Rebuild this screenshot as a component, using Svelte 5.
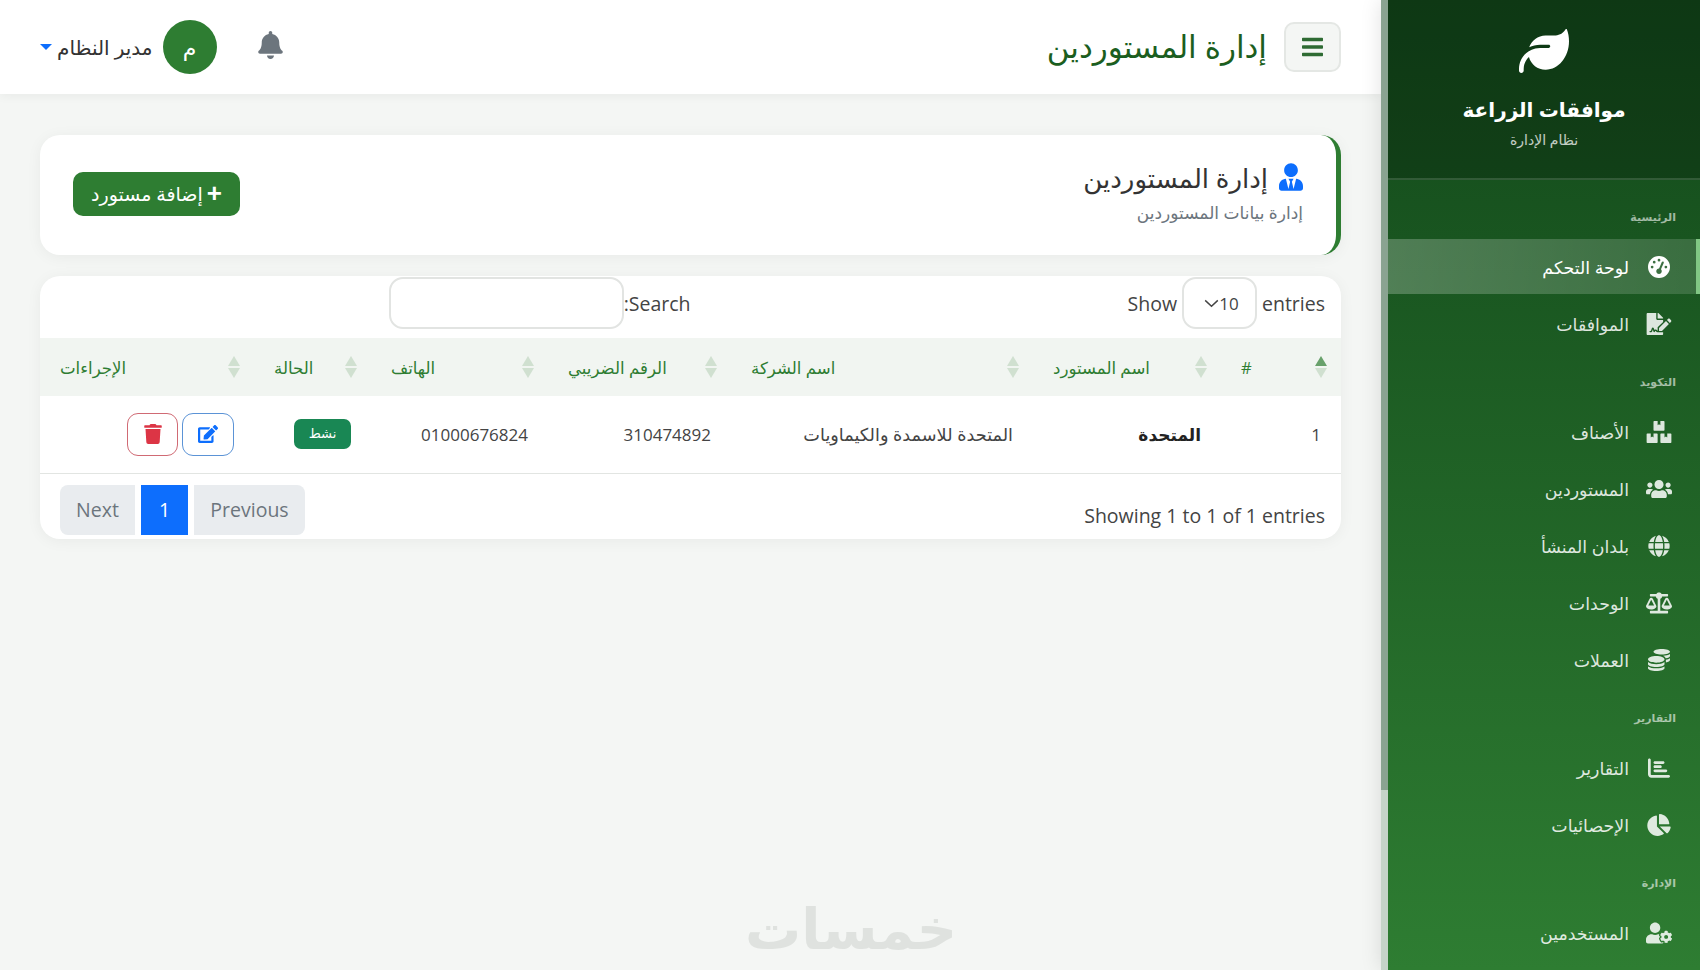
<script>
const icons = {
	gauge: ["0 0 512 512", "M0 256a256 256 0 1 1 512 0A256 256 0 1 1 0 256zM288 96a32 32 0 1 0 -64 0 32 32 0 1 0 64 0zM256 416c35.3 0 64-28.7 64-64c0-17.4-6.9-33.1-18.1-44.6L366 161.7c5.3-12.1-.2-26.3-12.3-31.6s-26.3 .2-31.6 12.3L257.9 288c-.6 0-1.3 0-1.9 0c-35.3 0-64 28.7-64 64s28.7 64 64 64zM176 144a32 32 0 1 0 -64 0 32 32 0 1 0 64 0zM96 288a32 32 0 1 0 0-64 32 32 0 1 0 0 64zm352-32a32 32 0 1 0 -64 0 32 32 0 1 0 64 0z"],
	file: ["0 0 576 512", "M218.17 424.14c-2.95-5.92-8.09-6.52-10.17-6.52s-7.22.59-10.02 6.19l-7.67 15.34c-6.37 12.78-25.03 11.37-29.48-2.09L144 386.59l-10.61 31.88c-5.89 17.66-22.38 29.53-41 29.53H80c-8.84 0-16-7.16-16-16s7.16-16 16-16h12.39c4.83 0 9.11-3.08 10.64-7.66l18.19-54.64c3.3-9.81 12.44-16.41 22.78-16.41s19.48 6.59 22.77 16.41l13.88 41.64c19.75-16.19 54.06-9.7 66 14.16 1.89 3.78 5.49 5.95 9.36 6.26v-82.12l128-127.09V160H248c-13.2 0-24-10.8-24-24V0H24C10.7 0 0 10.7 0 24v464c0 13.3 10.7 24 24 24h336c13.3 0 24-10.7 24-24v-40l-128-.11c-16.12-.31-30.58-9.28-37.83-23.75zM384 121.9c0-6.3-2.5-12.4-7-16.9L279.1 7c-4.5-4.5-10.6-7-17-7H256v128h128v-6.1zm-96 225.06V416h68.99l161.68-162.78-67.88-67.88L288 346.96zm280.54-179.63l-31.87-31.87c-9.94-9.94-26.07-9.94-36.01 0l-27.25 27.25 67.88 67.88 27.25-27.25c9.95-9.94 9.95-26.07 0-36.01z"],
	boxes: ["0 0 576 512", "M560 288h-80v96l-32-21.3-32 21.3v-96h-80c-8.8 0-16 7.2-16 16v192c0 8.8 7.2 16 16 16h224c8.8 0 16-7.2 16-16V304c0-8.8-7.2-16-16-16zm-384-64h224c8.8 0 16-7.2 16-16V16c0-8.8-7.2-16-16-16h-80v96l-32-21.3L256 96V0h-80c-8.8 0-16 7.2-16 16v192c0 8.8 7.2 16 16 16zm64 64h-80v96l-32-21.3L96 384v-96H16c-8.8 0-16 7.2-16 16v192c0 8.8 7.2 16 16 16h224c8.8 0 16-7.2 16-16V304c0-8.8-7.2-16-16-16z"],
	users: ["0 0 640 512", "M96 224c35.3 0 64-28.7 64-64s-28.7-64-64-64-64 28.7-64 64 28.7 64 64 64zm448 0c35.3 0 64-28.7 64-64s-28.7-64-64-64-64 28.7-64 64 28.7 64 64 64zm32 32h-64c-17.6 0-33.5 7.1-45.1 18.6 40.3 22.1 68.9 62 75.1 109.4h66c17.7 0 32-14.3 32-32v-32c0-35.3-28.7-64-64-64zm-256 0c61.9 0 112-50.1 112-112S381.9 32 320 32 208 82.1 208 144s50.1 112 112 112zm76.8 32h-8.3c-20.8 10-43.9 16-68.5 16s-47.6-6-68.5-16h-8.3C179.6 288 128 339.6 128 403.2V432c0 26.5 21.5 48 48 48h288c26.5 0 48-21.5 48-48v-28.8c0-63.6-51.6-115.2-115.2-115.2zm-223.7-13.4C161.5 263.1 145.6 256 128 256H64c-35.3 0-64 28.7-64 64v32c0 17.7 14.3 32 32 32h65.9c6.3-47.4 34.9-87.3 75.2-109.4z"],
	globe: ["0 0 496 512", "M336.5 160C322 70.7 287.8 8 248 8s-74 62.7-88.5 152h177zM152 256c0 22.2 1.2 43.5 3.3 64h185.3c2.1-20.5 3.3-41.8 3.3-64s-1.2-43.5-3.3-64H155.3c-2.1 20.5-3.3 41.8-3.3 64zm324.7-96c-28.6-67.9-86.5-120.4-158-141.6 24.4 33.8 41.2 84.7 50 141.6h108zM177.2 18.4C105.8 39.6 47.8 92.1 19.3 160h108c8.7-56.9 25.5-107.8 49.9-141.6zM487.4 192H372.7c2.1 21 3.3 42.5 3.3 64s-1.2 43-3.3 64h114.6c5.5-20.5 8.6-41.8 8.6-64s-3.1-43.5-8.5-64zM120 256c0-21.5 1.2-43 3.3-64H8.6C3.2 212.5 0 233.8 0 256s3.2 43.5 8.6 64h114.6c-2-21-3.2-42.5-3.2-64zm39.5 96c14.5 89.3 48.7 152 88.5 152s74-62.7 88.5-152h-177zm159.3 141.6c71.4-21.2 129.4-73.7 158-141.6h-108c-8.8 56.9-25.6 107.8-50 141.6zM19.3 352c28.6 67.9 86.5 120.4 158 141.6-24.4-33.8-41.2-84.7-50-141.6h-108z"],
	scale: ["0 0 640 512", "M256 336h-.02c0-16.18 1.34-8.73-85.05-181.51-17.65-35.29-68.19-35.36-85.87 0C-2.06 328.75.02 320.33.02 336H0c0 44.18 57.31 80 128 80s128-35.82 128-80zM128 176l72 144H56l72-144zm511.98 160c0-16.18 1.34-8.73-85.05-181.51-17.65-35.29-68.19-35.36-85.87 0-87.12 174.26-85.04 165.84-85.04 181.51H384c0 44.18 57.31 80 128 80s128-35.82 128-80h-.02zM440 320l72-144 72 144H440zm88 128H352V153.25c23.51-10.29 41.16-31.48 46.39-57.25H528c8.84 0 16-7.16 16-16V48c0-8.84-7.16-16-16-16H383.64C369.04 12.68 346.09 0 320 0s-49.04 12.68-63.64 32H112c-8.84 0-16 7.16-16 16v32c0 8.84 7.16 16 16 16h129.61c5.23 25.76 22.87 46.96 46.39 57.25V448H112c-8.84 0-16 7.16-16 16v32c0 8.84 7.16 16 16 16h416c8.84 0 16-7.16 16-16v-32c0-8.84-7.16-16-16-16z"],
	coins: ["0 0 512 512", "M0 405.3V448c0 35.3 86 64 192 64s192-28.7 192-64v-42.7C342.7 434.4 267.2 448 192 448S41.3 434.4 0 405.3zM320 128c106 0 192-28.7 192-64S426 0 320 0 128 28.7 128 64s86 64 192 64zM0 300.4V352c0 35.3 86 64 192 64s192-28.7 192-64v-51.6c-41.3 34-116.9 51.6-192 51.6S41.3 334.4 0 300.4zm416 11c57.3-11.1 96-31.7 96-55.4v-42.7c-23.2 16.4-57.3 27.6-96 34.5v63.6zM192 160C86 160 0 195.8 0 240s86 80 192 80 192-35.8 192-80-86-80-192-80zm219.3 56.3c60-10.8 100.7-32 100.7-56.3v-42.7c-35.5 25.1-96.5 38.6-160.7 41.8 29.5 14.3 51.2 33.5 60 57.2z"],
	bars: ["0 0 512 512", "M32 32c17.7 0 32 14.3 32 32V400c0 8.8 7.2 16 16 16H480c17.7 0 32 14.3 32 32s-14.3 32-32 32H80c-44.2 0-80-35.8-80-80V64C0 46.3 14.3 32 32 32zm96 96c0-17.7 14.3-32 32-32l192 0c17.7 0 32 14.3 32 32s-14.3 32-32 32l-192 0c-17.7 0-32-14.3-32-32zm32 64l128 0c17.7 0 32 14.3 32 32s-14.3 32-32 32l-128 0c-17.7 0-32-14.3-32-32s14.3-32 32-32zm0 96H416c17.7 0 32 14.3 32 32s-14.3 32-32 32H160c-17.7 0-32-14.3-32-32s14.3-32 32-32z"],
	pie: ["0 0 544 512", "M527.79 288H290.5l158.03 158.03c6.04 6.04 15.98 6.5 22.19.65 38.7-36.46 65.32-85.61 73.13-140.86 1.34-9.46-6.51-17.82-16.06-17.82zm-15.83-64.8C503.72 103.74 408.26 8.28 288.8.04 279.68-.59 272 7.1 272 16.24V240h223.77c9.14 0 16.82-7.68 16.19-16.8zM224 288V50.71c0-9.55-8.36-17.4-17.82-16.06C86.99 51.49-4.1 155.6.14 280.37 4.5 408.51 114.83 513.59 243.03 511.98c50.4-.63 96.97-16.87 135.26-44.03 7.9-5.6 8.42-17.23 1.57-24.08L224 288z"],
	usercog: ["0 0 640 512", "M610.5 373.3c2.6-14.1 2.6-28.5 0-42.6l25.8-14.9c3-1.7 4.3-5.2 3.3-8.5-6.7-21.5-18.2-41-33.2-57.1-2.3-2.5-6-3.1-9-1.4l-25.8 14.9c-10.9-9.3-23.4-16.5-36.9-21.3v-29.8c0-3.4-2.4-6.4-5.7-7.1-22.3-5-45-4.8-66.2 0-3.3.7-5.7 3.7-5.7 7.1v29.8c-13.5 4.8-26 12-36.9 21.3l-25.8-14.9c-2.9-1.7-6.7-1.1-9 1.4-15 16.1-26.5 35.6-33.2 57.1-1 3.3.4 6.8 3.3 8.5l25.8 14.9c-2.6 14.1-2.6 28.5 0 42.6l-25.8 14.9c-3 1.7-4.3 5.2-3.3 8.5 6.7 21.5 18.2 41 33.2 57.1 2.3 2.5 6 3.1 9 1.4l25.8-14.9c10.9 9.3 23.4 16.5 36.9 21.3v29.8c0 3.4 2.4 6.4 5.7 7.1 22.3 5 45 4.8 66.2 0 3.3-.7 5.7-3.7 5.7-7.1v-29.8c13.5-4.8 26-12 36.9-21.3l25.8 14.9c2.9 1.7 6.7 1.1 9-1.4 15-16.1 26.5-35.6 33.2-57.1 1-3.3-.4-6.8-3.3-8.5l-25.8-14.9zM496 400.5c-26.8 0-48.5-21.8-48.5-48.5s21.8-48.5 48.5-48.5 48.5 21.8 48.5 48.5-21.7 48.5-48.5 48.5zM224 256c70.7 0 128-57.3 128-128S294.7 0 224 0 96 57.3 96 128s57.3 128 128 128zm201.2 226.5c-2.3-1.2-4.6-2.6-6.8-3.9l-7.9 4.6c-6 3.4-12.8 5.3-19.6 5.3-10.9 0-21.4-4.6-28.9-12.6-18.3-19.8-32.3-43.9-40.2-69.6-5.5-17.7 1.9-36.4 17.9-45.7l7.9-4.6c-.1-2.6-.1-5.2 0-7.8l-7.9-4.6c-16-9.2-23.4-28-17.9-45.7.9-2.9 2.2-5.8 3.2-8.7-3.8-.3-7.5-1.2-11.4-1.2h-16.7c-22.2 10.2-46.9 16-72.9 16s-50.6-5.8-72.9-16h-16.7C60.2 288 0 348.2 0 422.4V464c0 26.5 21.5 48 48 48h352c10.1 0 19.5-3.2 27.2-8.5-1.2-3.8-2-7.7-2-11.8v-9.2z"],
	leaf: ["0 0 512 512", "M272 96c-78.6 0-145.1 51.5-167.7 122.5c33.6-17 71.5-26.5 111.7-26.5h88c8.8 0 16 7.2 16 16s-7.2 16-16 16H288 216s0 0 0 0c-16.6 0-32.7 1.9-48.3 5.4c-25.9 5.9-49.9 16.4-71.4 30.7c0 0 0 0 0 0C38.3 298.8 0 364.9 0 440v16c0 13.3 10.7 24 24 24s24-10.7 24-24V440c0-48.7 20.7-92.5 53.8-123.2C121.6 392.3 190.3 448 272 448l1 0c132.1-.7 239-130.9 239-291.4c0-42.6-7.5-83.1-21.1-119.6c-2.6-6.9-12.7-6.6-16.2 0C455.9 72.1 418.7 96 376 96L272 96z"],
	menu: ["0 0 448 512", "M16 132h416c8.837 0 16-7.163 16-16V76c0-8.837-7.163-16-16-16H16C7.163 60 0 67.163 0 76v40c0 8.837 7.163 16 16 16zm0 160h416c8.837 0 16-7.163 16-16v-40c0-8.837-7.163-16-16-16H16c-8.837 0-16 7.163-16 16v40c0 8.837 7.163 16 16 16zm0 160h416c8.837 0 16-7.163 16-16v-40c0-8.837-7.163-16-16-16H16c-8.837 0-16 7.163-16 16v40c0 8.837 7.163 16 16 16z"],
	bell: ["0 0 448 512", "M224 512c35.32 0 63.97-28.65 63.97-64H160.03c0 35.35 28.65 64 63.97 64zm215.39-149.71c-19.32-20.76-55.47-51.99-55.47-154.29 0-77.7-54.48-139.9-127.94-155.16V32c0-17.67-14.32-32-31.98-32s-31.98 14.33-31.98 32v20.84C118.56 68.1 64.08 130.3 64.08 208c0 102.3-36.15 133.53-55.47 154.29-6 6.45-8.66 14.16-8.61 21.71.11 16.4 12.98 32 32.1 32h383.8c19.12 0 32-15.6 32.1-32 .05-7.55-2.61-15.27-8.61-21.71z"],
	usertie: ["0 0 448 512", "M224 256c70.7 0 128-57.3 128-128S294.7 0 224 0 96 57.3 96 128s57.3 128 128 128zm95.8 32.6L272 480l-32-136 32-56h-96l32 56-32 136-47.8-191.4C56.9 292 0 350.3 0 422.4V464c0 26.5 21.5 48 48 48h352c26.5 0 48-21.5 48-48v-41.6c0-72.1-56.9-130.4-128.2-133.8z"],
	edit: ["0 0 576 512", "M402.6 83.2l90.2 90.2c3.8 3.8 3.8 10 0 13.8L274.4 405.6l-92.8 10.3c-12.4 1.4-22.9-9.1-21.5-21.5l10.3-92.8L388.8 83.2c3.8-3.8 10-3.8 13.8 0zm162-22.9l-48.8-48.8c-15.2-15.2-39.9-15.2-55.2 0l-35.4 35.4c-3.8 3.8-3.8 10 0 13.8l90.2 90.2c3.8 3.8 10 3.8 13.8 0l35.4-35.4c15.2-15.3 15.2-40 0-55.2zM384 346.2V448H64V128h231.8c3.2 0 6.2-1.3 8.5-3.5l40-40c7.6-7.6 2.2-20.5-8.5-20.5H48C21.5 64 0 85.5 0 112v352c0 26.5 21.5 48 48 48h352c26.5 0 48-21.5 48-48V306.2c0-10.7-12.9-16-20.5-8.5l-40 40c-2.2 2.3-3.5 5.3-3.5 8.5z"],
	trash: ["0 0 448 512", "M432 32H312l-9.4-18.7A24 24 0 0 0 281.1 0H166.8a23.72 23.72 0 0 0-21.4 13.3L136 32H16A16 16 0 0 0 0 48v32a16 16 0 0 0 16 16h416a16 16 0 0 0 16-16V48a16 16 0 0 0-16-16zM53.2 467a48 48 0 0 0 47.9 45h245.8a48 48 0 0 0 47.9-45L416 128H32z"],
};

const groups = [
	{ label: "الرئيسية", items: [
		{ text: "لوحة التحكم", icon: "gauge", active: true },
		{ text: "الموافقات", icon: "file" },
	] },
	{ label: "التكويد", items: [
		{ text: "الأصناف", icon: "boxes" },
		{ text: "المستوردين", icon: "users" },
		{ text: "بلدان المنشأ", icon: "globe" },
		{ text: "الوحدات", icon: "scale" },
		{ text: "العملات", icon: "coins" },
	] },
	{ label: "التقارير", items: [
		{ text: "التقارير", icon: "bars" },
		{ text: "الإحصائيات", icon: "pie" },
	] },
	{ label: "الإدارة", items: [
		{ text: "المستخدمين", icon: "usercog" },
	] },
];

const columns = ["#", "اسم المستورد", "اسم الشركة", "الرقم الضريبي", "الهاتف", "الحالة", "الإجراءات"];
const widths = [120, 188, 302, 183, 177, 117, 214];
</script>

{#snippet icon(name, cls)}
	<svg class={cls} viewBox={icons[name][0]} aria-hidden="true"><path d={icons[name][1]} /></svg>
{/snippet}

<div class="app">
	<aside class="sidebar">
		<div class="sb-track"><div class="sb-thumb"></div></div>
		<div class="sb-body">
			<div class="brand">
				{@render icon("leaf", "brand-leaf")}
				<div class="brand-name">موافقات الزراعة</div>
				<div class="brand-sub">نظام الإدارة</div>
			</div>
			<nav class="nav">
				{#each groups as g}
					<div class="group">
						<div class="group-label">{g.label}</div>
						{#each g.items as it}
							<div class="nav-item" class:active={it.active}>
								<span class="nav-icon">{@render icon(it.icon, "nav-svg")}</span>
								<span>{it.text}</span>
							</div>
						{/each}
					</div>
				{/each}
			</nav>
		</div>
	</aside>

	<main class="main">
		<header class="topbar">
			<div class="top-start">
				<button class="menu-btn">{@render icon("menu", "menu-svg")}</button>
				<h1 class="top-title">إدارة المستوردين</h1>
			</div>
			<div class="top-end">
				{@render icon("bell", "bell-svg")}
				<div class="user">
					<div class="avatar">م</div>
					<span class="user-name">مدير النظام</span>
					<span class="caret"></span>
				</div>
			</div>
		</header>

		<section class="content">
			<div class="page-head">
				<div class="head-text">
					<h2 class="page-title">{@render icon("usertie", "title-svg")}<span>إدارة المستوردين</span></h2>
					<p class="page-sub">إدارة بيانات المستوردين</p>
				</div>
				<button class="add-btn"><span class="plus">+</span>إضافة مستورد</button>
			</div>

			<div class="table-card">
				<div class="dt-top">
					<div class="dt-length">
						<span>entries</span>
						<div class="select"><span>10</span><svg class="chev" viewBox="0 0 16 10"><path d="M1 1.5l7 6.5 7-6.5" /></svg></div>
						<span>Show</span>
					</div>
					<label class="dt-filter">Search:<input class="search" type="text" /></label>
				</div>

				<table>
					<colgroup>
						{#each widths as w}<col style="width: {w}px" />{/each}
					</colgroup>
					<thead>
						<tr>
							{#each columns as c, i}
								<th>
									{c}
									<span class="sort" class:asc={i === 0}><i class="up"></i><i class="down"></i></span>
								</th>
							{/each}
						</tr>
					</thead>
					<tbody>
						<tr>
							<td>1</td>
							<td class="bold">المتحدة</td>
							<td class="company">المتحدة للاسمدة والكيماويات</td>
							<td>310474892</td>
							<td>01000676824</td>
							<td><span class="badge">نشط</span></td>
							<td>
								<div class="actions">
									<button class="act edit">{@render icon("edit", "act-svg")}</button>
									<button class="act del">{@render icon("trash", "act-svg")}</button>
								</div>
							</td>
						</tr>
					</tbody>
				</table>

				<div class="dt-bottom">
					<div class="dt-info">Showing 1 to 1 of 1 entries</div>
					<div class="pager">
						<span class="pg first">Previous</span>
						<span class="pg current">1</span>
						<span class="pg last">Next</span>
					</div>
				</div>
			</div>
		</section>

		<div class="watermark">خمسات</div>
	</main>
</div>

<style>
	:global(body) {
		margin: 0;
		background: #f4f6f4;
		font-family: "Open Sans", "DejaVu Sans", sans-serif;
	}
	.app {
		display: flex;
		direction: rtl;
		height: 970px;
		overflow: hidden;
		color: #333;
	}
	svg { fill: currentColor; display: block; flex: none; }
	button { font-family: inherit; cursor: pointer; }
	h1, h2, p { margin: 0; font-weight: 400; }

	/* sidebar */
	.sidebar {
		flex: none;
		width: 319px;
		display: flex;
		flex-direction: row;
		position: relative;
		z-index: 2;
		background: linear-gradient(180deg, #12481a 0%, #2e7d32 100%);
		box-shadow: 0 0 20px rgba(0, 0, 0, 0.12);
		color: #fff;
	}
	.sb-body { flex: 1; min-width: 0; order: 0; }
	.sb-track { order: 1; width: 7px; background: #c5d3c8; }
	.sb-thumb { height: 790px; background: #8aa391; }
	.brand {
		height: 180px;
		box-sizing: border-box;
		padding-top: 29px;
		display: flex;
		flex-direction: column;
		align-items: center;
		background: rgba(0, 0, 0, 0.22);
		border-bottom: 2px solid rgba(255, 255, 255, 0.14);
	}
	.brand-leaf { width: 50px; height: 50px; margin-top: -3px; }
	.brand-name { font-size: 20px; font-weight: 700; margin-top: 19px; line-height: 30px; }
	.brand-sub { font-size: 14px; opacity: 0.75; line-height: 20px; margin-top: 5px; }
	.nav { padding-top: 27px; }
	.group { margin-bottom: 21px; }
	.group-label {
		font-size: 11px;
		font-weight: 700;
		line-height: 20px;
		padding-right: 24px;
		margin-bottom: 12px;
		color: rgba(255, 255, 255, 0.6);
	}
	.nav-item {
		display: flex;
		align-items: center;
		gap: 16px;
		height: 55px;
		margin-bottom: 2px;
		padding-right: 27px;
		font-size: 17.4px;
		color: rgba(255, 255, 255, 0.85);
		box-sizing: border-box;
	}
	.nav-item.active {
		color: #fff;
		background: linear-gradient(90deg, rgba(255, 255, 255, 0.24), rgba(255, 255, 255, 0.14));
		border-right: 4px solid #81c784;
		padding-right: 23px;
	}
	.nav-icon { width: 28px; display: flex; justify-content: center; }
	.nav-svg { width: 26px; height: 22px; }

	/* top bar */
	.main { flex: 1; min-width: 0; position: relative; }
	.topbar {
		height: 94px;
		box-sizing: border-box;
		background: #fff;
		box-shadow: 0 2px 10px rgba(0, 0, 0, 0.05);
		display: flex;
		align-items: center;
		justify-content: space-between;
		padding: 0 40px;
	}
	.top-start { display: flex; align-items: center; gap: 17px; }
	.menu-btn {
		width: 57px;
		height: 50px;
		background: #f4f6f4;
		border: 2px solid #e4e7e4;
		border-radius: 10px;
		color: #2e6b33;
		display: flex;
		align-items: center;
		justify-content: center;
		padding: 0;
	}
	.menu-svg { width: 21px; height: 24px; }
	.top-title { font-size: 31px; color: #1b5e20; margin-top: -2px; }
	.top-end { display: flex; align-items: center; gap: 41px; }
	.bell-svg { width: 25px; height: 28px; color: #6c757d; margin-top: -5px; }
	.user { display: flex; align-items: center; gap: 10px; }
	.avatar {
		width: 54px;
		height: 54px;
		border-radius: 50%;
		background: #2e7d32;
		color: #fff;
		font-size: 22px;
		display: flex;
		align-items: center;
		justify-content: center;
	}
	.user-name { font-size: 20px; color: #333; }
	.caret {
		width: 0;
		height: 0;
		border-left: 6px solid transparent;
		border-right: 6px solid transparent;
		border-top: 6px solid #0d6efd;
		margin-right: -5px;
	}

	/* content */
	.content { padding: 41px 40px 0; }
	.page-head {
		height: 120px;
		box-sizing: border-box;
		background: #fff;
		border-radius: 20px;
		border-right: 5px solid #2e7d32;
		box-shadow: 0 2px 15px rgba(0, 0, 0, 0.05);
		padding: 0 33px 0 33px;
		display: flex;
		align-items: center;
		justify-content: space-between;
		margin-bottom: 21px;
	}
	.head-text { margin-top: -8px; }
	.page-title {
		display: flex;
		align-items: center;
		gap: 11px;
		font-size: 26px;
		line-height: 38px;
		color: #333;
	}
	.title-svg { width: 24px; height: 28px; color: #0d6efd; margin-top: -1px; }
	.page-sub { font-size: 17px; color: #6c757d; margin-top: 4px; }
	.add-btn {
		width: 167px;
		height: 44px;
		margin-top: -2px;
		background: #2e7d32;
		border: 0;
		border-radius: 10px;
		color: #fff;
		font-size: 19px;
		display: flex;
		align-items: center;
		justify-content: center;
		gap: 4px;
	}
	.plus { font-size: 26px; line-height: 1; font-family: "Liberation Sans", sans-serif; font-weight: 700; margin-top: -3px; }

	.table-card {
		background: #fff;
		border-radius: 20px;
		box-shadow: 0 2px 15px rgba(0, 0, 0, 0.05);
		overflow: hidden;
	}
	.dt-top {
		display: grid;
		grid-template-columns: 1fr 1fr;
		height: 62px;
		box-sizing: border-box;
		padding-top: 1px;
		font-size: 19.5px;
		color: #444;
	}
	.dt-length {
		display: flex;
		justify-content: flex-start;
		gap: 5px;
		padding-right: 16px;
		align-items: center;
		height: 52px;
	}
	.select {
		width: 75px;
		height: 52px;
		box-sizing: border-box;
		border: 2px solid #e2e4e2;
		border-radius: 14px;
		display: flex;
		align-items: center;
		justify-content: center;
		font-size: 17px;
		padding-left: 4px;
	}
	.chev { width: 15px; height: 9px; fill: none; stroke: #444; stroke-width: 1.6; }
	.dt-filter { display: flex; align-items: center; height: 52px; }
	.search {
		width: 235px;
		height: 52px;
		box-sizing: border-box;
		border: 2px solid #e2e4e2;
		border-radius: 14px;
		background: #fff;
		outline: none;
	}
	table { width: 100%; border-collapse: collapse; table-layout: fixed; }
	th {
		position: relative;
		height: 58px;
		padding: 0 20px;
		text-align: left;
		font-size: 16.6px;
		font-weight: 400;
		color: #2e7d32;
		background: #f1f5f1;
	}
	.sort {
		position: absolute;
		right: 14px;
		top: 18px;
		display: flex;
		flex-direction: column;
		gap: 2px;
	}
	.sort i {
		display: block;
		width: 0;
		height: 0;
		border-left: 6px solid transparent;
		border-right: 6px solid transparent;
	}
	.sort .up { border-bottom: 10px solid rgba(46, 125, 50, 0.17); }
	.sort .down { border-top: 10px solid rgba(46, 125, 50, 0.17); }
	.sort.asc .up { border-bottom-color: rgba(46, 125, 50, 0.7); }
	td {
		height: 77px;
		box-sizing: border-box;
		padding: 0 20px;
		font-size: 17px;
		text-align: right;
		color: #444;
		border-bottom: 1px solid #e2e5e2;
	}
	td.bold { font-weight: 700; color: #222; }
	td.company { font-size: 17.7px; }
	.badge {
		display: inline-block;
		width: 57px;
		height: 30px;
		line-height: 28px;
		text-align: center;
		background: #198754;
		color: #fff;
		border-radius: 7px;
		font-size: 13px;
		vertical-align: middle;
	}
	.actions { display: flex; gap: 4px; }
	.act {
		width: 51px;
		height: 43px;
		box-sizing: border-box;
		background: #fff;
		border-radius: 11px;
		display: flex;
		align-items: center;
		justify-content: center;
		padding: 0;
	}
	.act.edit { width: 52px; border: 1px solid #5b93d6; color: #0d6efd; }
	.act.del { border: 1px solid #d06a74; color: #dc3545; }
	.act-svg { width: 20px; height: 20px; }
	.dt-bottom {
		display: grid;
		grid-template-columns: 1fr 1fr;
		height: 65px;
		box-sizing: border-box;
		padding: 11px 16px 3px 20px;
	}
	.dt-info { font-size: 19.5px; color: #444; align-self: end; padding-bottom: 7px; direction: ltr; text-align: right; }
	.pager { display: flex; gap: 6px; justify-content: flex-end; }
	.pg {
		height: 50px;
		box-sizing: border-box;
		padding: 0 17px;
		display: flex;
		align-items: center;
		background: #e9ecef;
		color: #6c757d;
		font-size: 19.5px;
	}
	.pg.first { border-radius: 0 8px 8px 0; padding: 0 16px; width: 111px; justify-content: center; }
	.pg.last { border-radius: 8px 0 0 8px; width: 75px; justify-content: center; }
	.pg.current { background: #0d6efd; color: #fff; width: 47px; justify-content: center; padding: 0; }

	.watermark {
		position: absolute;
		left: 745px;
		bottom: 8px;
		font-size: 56px;
		font-weight: 700;
		line-height: 70px;
		color: #dfe2df;
	}
</style>
